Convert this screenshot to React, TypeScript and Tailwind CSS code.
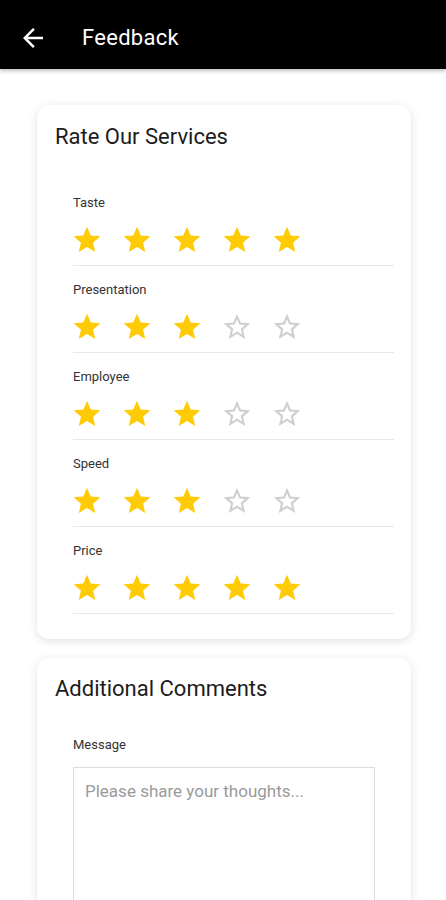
import React from 'react';

const FONT = { fontFamily: 'Roboto, "Noto Sans", sans-serif' };

const ratings: { label: string; value: number }[] = [
  { label: 'Taste', value: 5 },
  { label: 'Presentation', value: 3 },
  { label: 'Employee', value: 3 },
  { label: 'Speed', value: 3 },
  { label: 'Price', value: 5 },
];

const Star: React.FC<{ filled: boolean }> = ({ filled }) =>
  filled ? (
    <svg width="32" height="32" viewBox="0 0 24 24" className="text-[#ffcb05]">
      <path fill="currentColor" d="M12 17.27L18.18 21l-1.64-7.03L22 9.24l-7.19-.61L12 2 9.19 8.63 2 9.24l5.46 4.73L5.82 21z" />
    </svg>
  ) : (
    <svg width="32" height="32" viewBox="0 0 24 24" className="text-[#cfcfcf]">
      <path
        fill="currentColor"
        d="M22 9.24l-7.19-.62L12 2 9.19 8.63 2 9.24l5.46 4.73L5.82 21 12 17.27 18.18 21l-1.63-7.03L22 9.24zM12 15.4l-3.76 2.27 1-4.28-3.32-2.88 4.38-.38L12 6.1l1.71 4.04 4.38.38-3.32 2.88 1 4.28L12 15.4z"
      />
    </svg>
  );

const RatingRow: React.FC<{ label: string; value: number }> = ({ label, value }) => (
  <div className="flex flex-col pt-[16px] first:pt-0">
    <span className="text-[13px] leading-[16px] text-[#333]">{label}</span>
    <div className="flex gap-[18px] mt-[13px] -ml-[2px]">
      {[1, 2, 3, 4, 5].map((n) => (
        <Star key={n} filled={n <= value} />
      ))}
    </div>
    <div className="h-px bg-[#e8e8e8] mt-[9px]" />
  </div>
);

export default function App() {
  return (
    <div className="w-[446px] min-h-[900px] bg-white overflow-hidden" style={FONT}>
      <header className="h-[69px] bg-black flex items-center pt-[6px] shadow-[0_2px_4px_rgba(0,0,0,0.25)] relative z-10">
        <svg width="30" height="30" viewBox="0 0 24 24" className="ml-[18px] text-white">
          <path fill="currentColor" d="M20 11H7.83l5.59-5.59L12 4l-8 8 8 8 1.41-1.41L7.83 13H20v-2z" />
        </svg>
        <h1 className="ml-[34px] text-white text-[22px] font-normal tracking-[0.3px]">Feedback</h1>
      </header>

      <main className="flex flex-col gap-[19px] pt-[36px] pl-[37px] pr-[35px]">
        <section className="bg-white rounded-[12px] shadow-[0_2px_10px_rgba(0,0,0,0.12)] pt-[19px] pb-[25px]">
          <h2 className="pl-[18px] text-[22px] leading-[26px] text-[#1c1c1c]">Rate Our Services</h2>
          <div className="flex flex-col pl-[36px] pr-[17px] mt-[45px]">
            {ratings.map((r) => (
              <RatingRow key={r.label} label={r.label} value={r.value} />
            ))}
          </div>
        </section>

        <section className="bg-white rounded-[12px] shadow-[0_2px_10px_rgba(0,0,0,0.12)] pt-[18px] pb-[24px]">
          <h2 className="pl-[18px] text-[22px] leading-[26px] text-[#1c1c1c]">Additional Comments</h2>
          <div className="flex flex-col pl-[36px] mt-[35px]">
            <label className="text-[13px] leading-[16px] text-[#333]">Message</label>
            <textarea
              placeholder="Please share your thoughts..."
              className="mt-[14px] w-[302px] h-[170px] border border-[#dcdcdc] px-[11px] py-[12px] text-[17px] leading-[22px] text-[#333] placeholder:text-[#9a9a9a] resize-none outline-none"
              style={FONT}
            />
          </div>
        </section>
      </main>
    </div>
  );
}
